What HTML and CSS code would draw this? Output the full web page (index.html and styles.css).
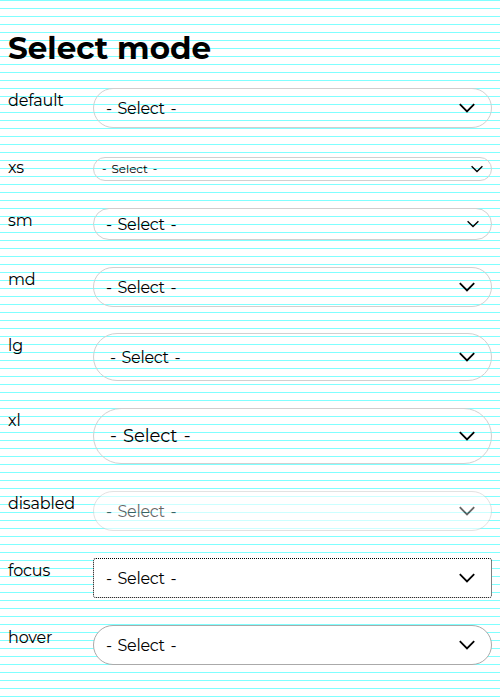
FILE: index.html
```html
<!DOCTYPE html>
<html lang="en">
<head>
<meta charset="utf-8">
<title>Select mode</title>
<link rel="stylesheet" href="styles.css">
</head>
<body>
<svg class="defs" width="0" height="0"><symbol id="chevron" viewBox="0 0 16 16"><path d="M.8 4.2 8 11.4l7.2-7.2" fill="none" stroke="currentColor" stroke-width="1.8"/></symbol></svg>
<h1>Select mode</h1>
<main class="rows">
<div class="row"><span class="label">default</span><div class="select"><span>- Select -</span><svg><use href="#chevron"/></svg></div></div>
<div class="row"><span class="label">xs</span><div class="select xs"><span>- Select -</span><svg><use href="#chevron"/></svg></div></div>
<div class="row"><span class="label">sm</span><div class="select sm"><span>- Select -</span><svg><use href="#chevron"/></svg></div></div>
<div class="row"><span class="label">md</span><div class="select"><span>- Select -</span><svg><use href="#chevron"/></svg></div></div>
<div class="row row-lg"><span class="label">lg</span><div class="select lg"><span>- Select -</span><svg><use href="#chevron"/></svg></div></div>
<div class="row"><span class="label">xl</span><div class="select xl"><span>- Select -</span><svg><use href="#chevron"/></svg></div></div>
<div class="row"><span class="label">disabled</span><div class="select disabled"><span>- Select -</span><svg><use href="#chevron"/></svg></div></div>
<div class="row"><span class="label">focus</span><div class="select focus"><span>- Select -</span><svg><use href="#chevron"/></svg></div></div>
<div class="row"><span class="label">hover</span><div class="select hover"><span>- Select -</span><svg><use href="#chevron"/></svg></div></div>
</main>
</body>
</html>
```
FILE: styles.css
```css
* { box-sizing: border-box; }
html { background: #fff; }
body {
  margin: 0;
  padding: 28px 8px 0;
  height: 700px;
  overflow: hidden;
  background: repeating-linear-gradient(#80ffff 0 1px, transparent 1px 8px);
  color: #000;
  font: 16px/24px Montserrat, Inter, sans-serif;
}
.defs { position: absolute; }
h1 { margin: 0 0 20px; font-size: 31px; line-height: 40px; font-weight: 700; }
.rows { display: grid; gap: 27px; }
.row { display: grid; grid-template-columns: 85px 1fr; align-items: start; }
.row-lg { margin-top: -1px; }
.label { height: 24px; padding-top: 1px; letter-spacing: -.15px; }
.select {
  display: flex;
  align-items: center;
  justify-content: space-between;
  height: 40px;
  padding: 0 16px 0 12px;
  border: 1px solid #d0d0d0;
  border-radius: 28px;
  letter-spacing: -.3px;
  word-spacing: 1.8px;
}
.select span { padding-top: 2px; }
.select svg { width: 16px; height: 16px; flex: none; }
.xs { height: 24px; margin-top: 2px; padding: 0 8px; font-size: 12px; letter-spacing: -.05px; }
.select.xs span, .select.xl span { padding-top: 0; }
.xs svg, .sm svg { width: 12px; height: 12px; }
.sm { height: 32px; padding-right: 12px; }
.lg { height: 48px; padding-left: 16px; }
.xl { height: 56px; padding-left: 16px; font-size: 18px; letter-spacing: -.15px; }
.disabled { background: #fff; opacity: .6; }
.focus { background: #fff; border: 1px dotted #000; border-radius: 3px; }
.hover { background: #fff; border-color: #aaa; }
```
